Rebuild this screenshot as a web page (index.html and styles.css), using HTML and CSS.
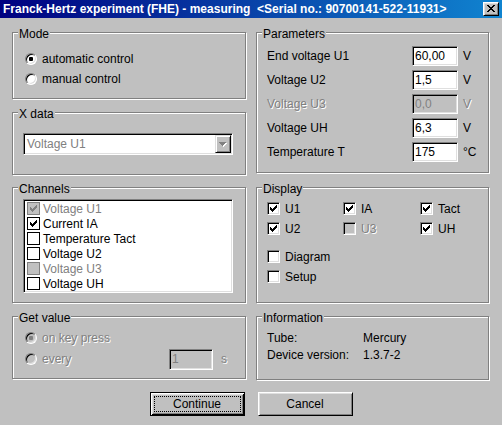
FILE: index.html
```html
<!DOCTYPE html>
<html>
<head>
<meta charset="utf-8">
<link rel="stylesheet" href="styles.css">
</head>
<body>
<div class="window">
  <div class="titlebar">
    <span class="title">Franck-Hertz experiment (FHE) - measuring  &lt;Serial no.: 90700141-522-11931&gt;</span>
    <span class="close-btn"><svg class="close-x" width="8" height="7" viewBox="0 0 8 7" shape-rendering="crispEdges"><path fill="#000" d="M0 0h2v1h-2zM6 0h2v1h-2zM1 1h2v1h-2zM5 1h2v1h-2zM2 2h4v1h-4zM3 3h2v1h-2zM2 4h4v1h-4zM1 5h2v1h-2zM5 5h2v1h-2zM0 6h2v1h-2zM6 6h2v1h-2z"/></svg></span>
  </div>

  <div class="main">
    <div class="col">
      <div class="group g-mode">
        <span class="legend">Mode</span>
        <div class="radio-row"><span class="radio checked"></span><span class="rlabel">automatic control</span></div>
        <div class="radio-row"><span class="radio"></span><span class="rlabel">manual control</span></div>
      </div>

      <div class="group g-xdata">
        <span class="legend">X data</span>
        <div class="combo">
          <span class="combo-text">Voltage U1</span>
          <span class="combo-btn"><svg width="8" height="5" viewBox="0 0 8 5" shape-rendering="crispEdges"><path fill="#fff" d="M1 1h7v1h-7zM2 2h5v1h-5zM3 3h3v1h-3zM4 4h1v1h-1z"/><path fill="#808080" d="M0 0h7v1h-7zM1 1h5v1h-5zM2 2h3v1h-3zM3 3h1v1h-1z"/></svg></span>
        </div>
      </div>

      <div class="group g-channels">
        <span class="legend">Channels</span>
        <div class="listbox">
          <div class="litem disabled"><span class="lcb off"><svg class="chk" width="7" height="7" viewBox="0 0 7 7" shape-rendering="crispEdges"><path fill="#808080" d="M6 0h1v1h-1zM5 1h2v1h-2zM0 2h1v1h-1zM4 2h3v1h-3zM0 3h2v1h-2zM3 3h3v1h-3zM0 4h5v1h-5zM1 5h3v1h-3zM2 6h1v1h-1z"/></svg></span><span>Voltage U1</span></div>
          <div class="litem"><span class="lcb"><svg class="chk" width="7" height="7" viewBox="0 0 7 7" shape-rendering="crispEdges"><path fill="#000" d="M6 0h1v1h-1zM5 1h2v1h-2zM0 2h1v1h-1zM4 2h3v1h-3zM0 3h2v1h-2zM3 3h3v1h-3zM0 4h5v1h-5zM1 5h3v1h-3zM2 6h1v1h-1z"/></svg></span><span>Current IA</span></div>
          <div class="litem"><span class="lcb"></span><span>Temperature Tact</span></div>
          <div class="litem"><span class="lcb"></span><span>Voltage U2</span></div>
          <div class="litem disabled"><span class="lcb off"></span><span>Voltage U3</span></div>
          <div class="litem"><span class="lcb"></span><span>Voltage UH</span></div>
        </div>
      </div>

      <div class="group g-getvalue">
        <span class="legend">Get value</span>
        <div class="radio-row"><span class="radio off checked"></span><span class="rlabel emboss">on key press</span></div>
        <div class="radio-row tall"><span class="radio off"></span><span class="rlabel emboss every">every</span><span class="edit small off">1</span><span class="unit-s emboss">s</span></div>
      </div>
    </div>

    <div class="col">
      <div class="group g-params">
        <span class="legend">Parameters</span>
        <div class="param-grid">
          <span>End voltage U1</span><span class="edit">60,00</span><span>V</span>
          <span>Voltage U2</span><span class="edit">1,5</span><span>V</span>
          <span class="emboss">Voltage U3</span><span class="edit off">0,0</span><span class="emboss">V</span>
          <span>Voltage UH</span><span class="edit">6,3</span><span>V</span>
          <span>Temperature T</span><span class="edit">175</span><span>°C</span>
        </div>
      </div>

      <div class="group g-display">
        <span class="legend">Display</span>
        <div class="disp-grid">
          <div class="cbrow"><span class="cb"><svg class="chk" width="7" height="7" viewBox="0 0 7 7" shape-rendering="crispEdges"><path fill="#000" d="M6 0h1v1h-1zM5 1h2v1h-2zM0 2h1v1h-1zM4 2h3v1h-3zM0 3h2v1h-2zM3 3h3v1h-3zM0 4h5v1h-5zM1 5h3v1h-3zM2 6h1v1h-1z"/></svg></span><span class="cblabel">U1</span></div>
          <div class="cbrow"><span class="cb"><svg class="chk" width="7" height="7" viewBox="0 0 7 7" shape-rendering="crispEdges"><path fill="#000" d="M6 0h1v1h-1zM5 1h2v1h-2zM0 2h1v1h-1zM4 2h3v1h-3zM0 3h2v1h-2zM3 3h3v1h-3zM0 4h5v1h-5zM1 5h3v1h-3zM2 6h1v1h-1z"/></svg></span><span class="cblabel">IA</span></div>
          <div class="cbrow"><span class="cb"><svg class="chk" width="7" height="7" viewBox="0 0 7 7" shape-rendering="crispEdges"><path fill="#000" d="M6 0h1v1h-1zM5 1h2v1h-2zM0 2h1v1h-1zM4 2h3v1h-3zM0 3h2v1h-2zM3 3h3v1h-3zM0 4h5v1h-5zM1 5h3v1h-3zM2 6h1v1h-1z"/></svg></span><span class="cblabel">Tact</span></div>
          <div class="cbrow"><span class="cb"><svg class="chk" width="7" height="7" viewBox="0 0 7 7" shape-rendering="crispEdges"><path fill="#000" d="M6 0h1v1h-1zM5 1h2v1h-2zM0 2h1v1h-1zM4 2h3v1h-3zM0 3h2v1h-2zM3 3h3v1h-3zM0 4h5v1h-5zM1 5h3v1h-3zM2 6h1v1h-1z"/></svg></span><span class="cblabel">U2</span></div>
          <div class="cbrow"><span class="cb off"></span><span class="cblabel emboss">U3</span></div>
          <div class="cbrow"><span class="cb"><svg class="chk" width="7" height="7" viewBox="0 0 7 7" shape-rendering="crispEdges"><path fill="#000" d="M6 0h1v1h-1zM5 1h2v1h-2zM0 2h1v1h-1zM4 2h3v1h-3zM0 3h2v1h-2zM3 3h3v1h-3zM0 4h5v1h-5zM1 5h3v1h-3zM2 6h1v1h-1z"/></svg></span><span class="cblabel">UH</span></div>
        </div>
        <div class="cbrow sep"><span class="cb"></span><span class="cblabel">Diagram</span></div>
        <div class="cbrow"><span class="cb"></span><span class="cblabel">Setup</span></div>
      </div>

      <div class="group g-info">
        <span class="legend">Information</span>
        <div class="info-grid">
          <span>Tube:</span><span>Mercury</span>
          <span>Device version:</span><span>1.3.7-2</span>
        </div>
      </div>
    </div>
  </div>

  <div class="buttons">
    <span class="btn btn-default">Continue</span>
    <span class="btn">Cancel</span>
  </div>
</div>
</body>
</html>
```

FILE: styles.css
```css
html, body {
  margin: 0;
  padding: 0;
  background: #c0c0c0;
}
body {
  font-family: "Liberation Sans", Arial, sans-serif;
  font-size: 12px;
  color: #000;
}
.window {
  width: 502px;
  height: 425px;
  background: #c0c0c0;
  overflow: hidden;
}
.titlebar {
  height: 18px;
  background: linear-gradient(to right, #000080, #1084d0);
  color: #fff;
  display: flex;
  align-items: center;
  justify-content: space-between;
  padding: 0 3px 0 3px;
}
.title {
  font-weight: bold;
  white-space: pre;
  line-height: 18px;
}
.close-btn {
  width: 16px;
  height: 14px;
  box-sizing: border-box;
  background: #c0c0c0;
  border: 1px solid;
  border-color: #fff #000 #000 #fff;
  box-shadow: inset 1px 1px #dfdfdf, inset -1px -1px #808080;
}
.close-x {
  display: block;
  margin: 2px 0 0 3px;
}

.main {
  display: flex;
  align-items: flex-start;
  padding: 14px 0 0 12px;
  gap: 10px;
}
.col {
  display: flex;
  flex-direction: column;
}
.group {
  position: relative;
  box-sizing: border-box;
  border: 1px solid #808080;
  box-shadow: inset 1px 1px #fff, 1px 1px #fff;
}
.legend {
  position: absolute;
  top: -5px;
  left: 5px;
  padding: 0 1px;
  line-height: 13px;
  background: #c0c0c0;
}

.g-mode { width: 234px; height: 67px; padding: 16px 0 0 12px; }
.g-xdata { width: 234px; height: 63px; margin-top: 13px; padding: 20px 0 0 10px; }
.g-channels { width: 234px; height: 116px; margin-top: 12px; padding: 11px 0 0 10px; }
.g-getvalue { width: 234px; height: 63px; margin-top: 13px; padding: 11px 0 0 12px; }

.g-params { width: 233px; height: 141px; padding: 13px 0 0 10px; }
.g-display { width: 233px; height: 116px; margin-top: 14px; padding: 11px 0 0 10px; }
.g-info { width: 233px; height: 64px; margin-top: 13px; padding: 12px 0 0 10px; }

/* radio */
.radio-row {
  display: flex;
  align-items: center;
  height: 20px;
}
.radio-row.tall { height: 22px; }
.radio {
  position: relative;
  width: 12px;
  height: 12px;
  box-sizing: border-box;
  border-radius: 50%;
  border: 1px solid;
  border-color: #808080 #fff #fff #808080;
  box-shadow: inset 1px 1px #000, inset -1px -1px #dfdfdf;
  background: #fff;
  flex: none;
}
.radio.off { background: #c0c0c0; }
.radio.checked::after {
  content: "";
  position: absolute;
  left: 3px;
  top: 3px;
  width: 4px;
  height: 4px;
  border-radius: 1px;
  background: #000;
}
.radio.off.checked::after { background: #808080; }
.rlabel { margin-left: 5px; }
.rlabel.every { width: 127px; flex: none; }

.emboss {
  color: #808080;
  text-shadow: 1px 1px #fff;
}

/* edit box */
.edit {
  display: flex;
  align-items: center;
  box-sizing: border-box;
  height: 20px;
  padding-left: 2px;
  background: #fff;
  border: 1px solid;
  border-color: #808080 #fff #fff #808080;
  box-shadow: inset 1px 1px #000, inset -1px -1px #dfdfdf;
}
.edit.off {
  background: #c0c0c0;
  color: #808080;
}
.edit.small {
  width: 44px;
  height: 21px;
}
.unit-s { margin-left: 8px; }

.param-grid {
  display: grid;
  grid-template-columns: 140px 46px auto;
  grid-auto-rows: 20px;
  row-gap: 4px;
  column-gap: 5px;
  align-items: center;
}

/* combo */
.combo {
  display: flex;
  align-items: center;
  justify-content: space-between;
  box-sizing: border-box;
  width: 210px;
  height: 22px;
  padding: 0 1px 0 2px;
  background: #fff;
  border: 1px solid;
  border-color: #808080 #fff #fff #808080;
  box-shadow: inset 1px 1px #000, inset -1px -1px #dfdfdf;
}
.combo-text { color: #808080; margin-left: 1px; }
.combo-btn {
  display: flex;
  align-items: center;
  justify-content: center;
  width: 16px;
  height: 18px;
  box-sizing: border-box;
  background: #c0c0c0;
  border: 1px solid;
  border-color: #dfdfdf #000 #000 #dfdfdf;
  box-shadow: inset 1px 1px #fff, inset -1px -1px #808080;
}

/* listbox */
.listbox {
  box-sizing: border-box;
  width: 210px;
  height: 94px;
  padding: 1px 0 0 3px;
  background: #fff;
  border: 1px solid;
  border-color: #808080 #fff #fff #808080;
  box-shadow: inset 1px 1px #000, inset -1px -1px #dfdfdf;
}
.litem {
  display: flex;
  align-items: center;
  height: 15px;
}
.litem.disabled { color: #808080; }
.lcb {
  width: 13px;
  height: 13px;
  box-sizing: border-box;
  border: 1px solid #000;
  background: #fff;
  margin-right: 3px;
  flex: none;
}
.lcb.off {
  border-color: #808080;
  background: #c0c0c0;
}
.chk {
  display: block;
  margin: 2px 0 0 2px;
}

/* checkbox */
.disp-grid {
  display: grid;
  grid-template-columns: 76px 77px 1fr;
  row-gap: 1px;
}
.cbrow {
  display: flex;
  align-items: center;
  height: 19px;
}
.cbrow.sep { margin-top: 9px; margin-bottom: 1px; }
.cb {
  width: 13px;
  height: 13px;
  box-sizing: border-box;
  background: #fff;
  border: 1px solid;
  border-color: #808080 #fff #fff #808080;
  box-shadow: inset 1px 1px #000, inset -1px -1px #dfdfdf;
  flex: none;
}
.cb .chk { margin: 2px 0 0 2px; }
.cb.off { background: #c0c0c0; }
.cblabel { margin-left: 5px; }

/* info */
.info-grid {
  display: grid;
  grid-template-columns: 96px auto;
  grid-auto-rows: 17px;
  align-items: center;
}

/* buttons */
.buttons {
  display: flex;
  justify-content: center;
  gap: 13px;
  margin-top: 12px;
}
.btn {
  position: relative;
  display: flex;
  align-items: center;
  justify-content: center;
  width: 95px;
  height: 24px;
  box-sizing: border-box;
  background: #c0c0c0;
  border: 1px solid;
  border-color: #fff #000 #000 #fff;
  box-shadow: inset 1px 1px #dfdfdf, inset -1px -1px #808080;
}
.btn-default {
  border-color: #000;
  box-shadow: inset 1px 1px #fff, inset -1px -1px #000, inset 2px 2px #dfdfdf, inset -2px -2px #808080;
}
.btn-default::after {
  content: "";
  position: absolute;
  left: 3px;
  top: 3px;
  right: 3px;
  bottom: 3px;
  border: 1px dotted #000;
}
```
